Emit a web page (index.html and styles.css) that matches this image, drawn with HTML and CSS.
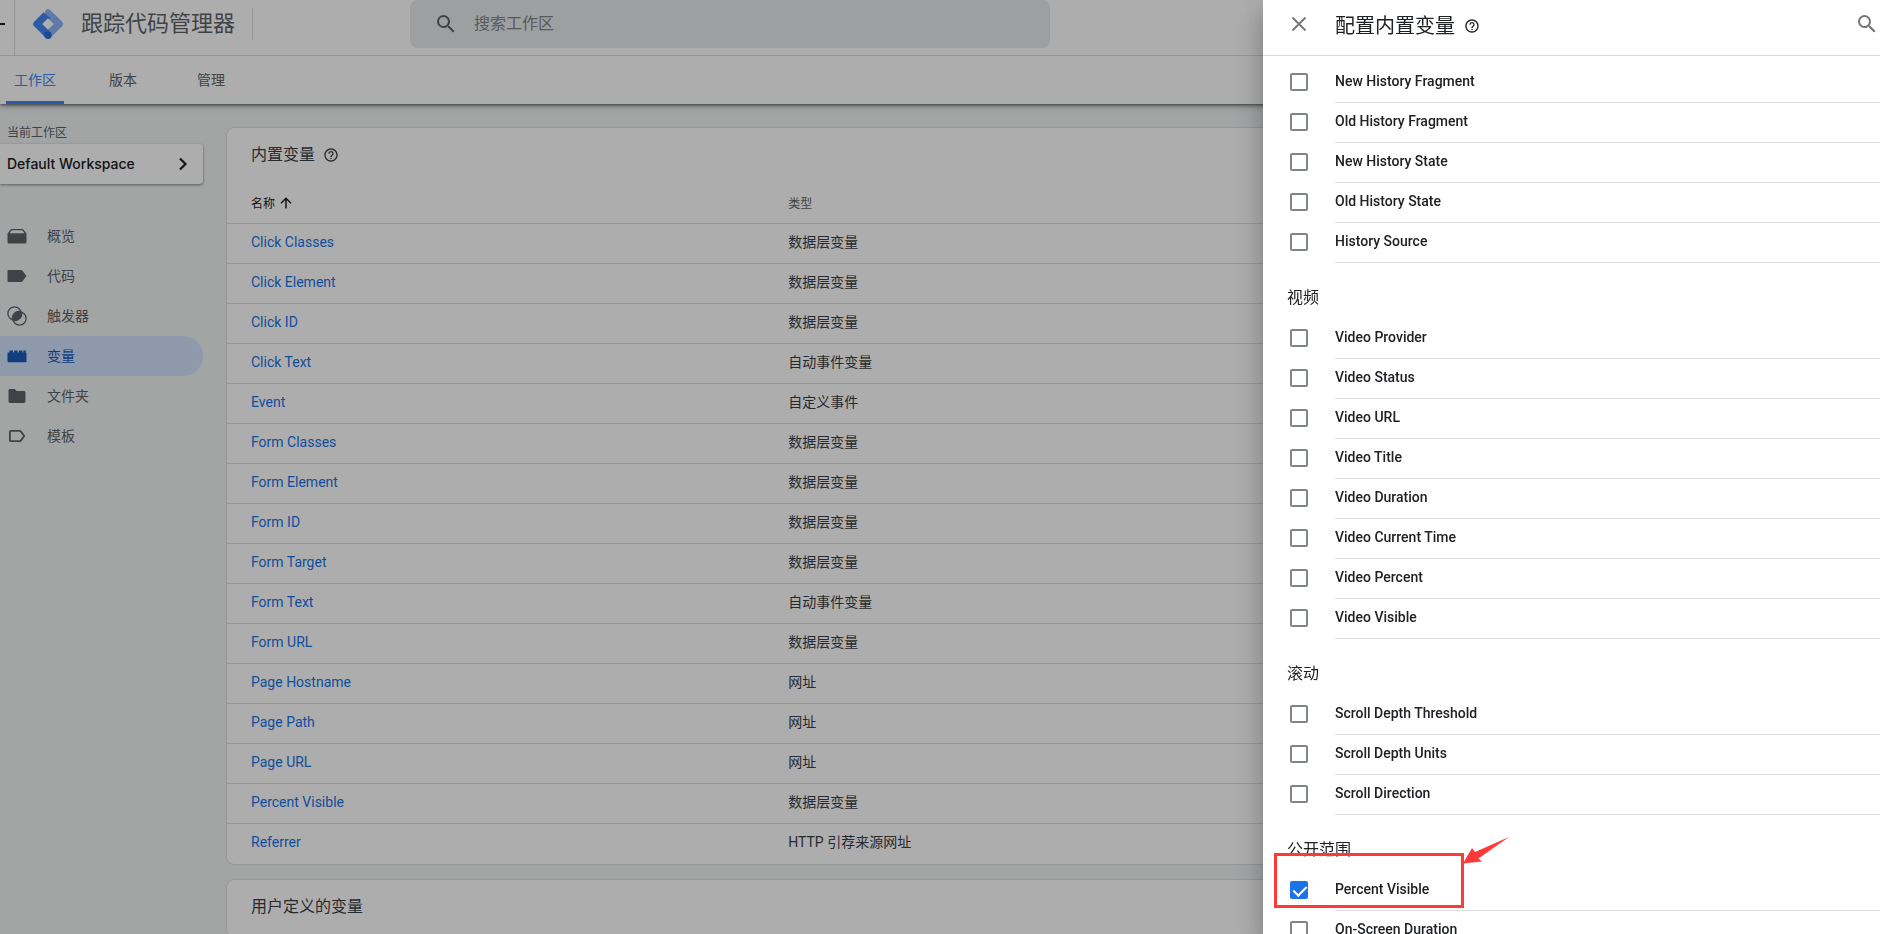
FILE: index.html
```html
<!DOCTYPE html>
<html lang="zh-CN">
<head>
<meta charset="utf-8">
<title>跟踪代码管理器</title>
<link rel="stylesheet" href="styles.css">
</head>
<body>
<svg class="sprite" aria-hidden="true">
  <symbol id="i-search" viewBox="0 0 24 24"><path d="M15.5 14h-.79l-.28-.27A6.471 6.471 0 0 0 16 9.5 6.5 6.5 0 1 0 9.5 16c1.61 0 3.09-.59 4.23-1.57l.27.28v.79l5 4.99L20.49 19l-4.99-5zm-6 0C7.01 14 5 11.99 5 9.5S7.01 5 9.5 5 14 7.01 14 9.5 11.99 14 9.5 14z"/></symbol>
  <symbol id="i-help" viewBox="0 0 24 24"><path d="M11 18h2v-2h-2v2zm1-16C6.48 2 2 6.48 2 12s4.48 10 10 10 10-4.48 10-10S17.52 2 12 2zm0 18c-4.41 0-8-3.59-8-8s3.59-8 8-8 8 3.59 8 8-3.59 8-8 8zm0-14c-2.21 0-4 1.79-4 4h2c0-1.1.9-2 2-2s2 .9 2 2c0 2-3 1.750-3 5h2c0-2.250 3-2.500 3-5 0-2.210-1.790-4-4-4z"/></symbol>
</svg>

<div class="app">
  <header class="topbar">
    <button class="back" type="button" aria-label="返回"><svg viewBox="0 0 14 24"><path d="M0 11h5v2H0z"/></svg></button>
    <div class="brand">
      <svg class="logo" viewBox="0 0 30 30">
        <path fill="#8ab4f8" d="M12.700 1.200a3.200 3.200 0 0 1 4.600 0L28.800 12.700a3.200 3.200 0 0 1 0 4.600L17.500 28.600 9 15z"/>
        <path fill="#4285f4" d="M10.600 3.300 1.200 12.700a3.200 3.200 0 0 0 0 4.600L12.500 28.600l7.800-8.200-5.300-.9L10.500 15l4.500-4.500 3-1z"/>
        <path fill="#8ab4f8" d="M28.800 12.700 21 4.900l-3.500 5.200L20 15l-5 5.300 5.200 5.400 8.600-8.400a3.200 3.200 0 0 0 0-4.600z"/>
        <circle cx="15" cy="26.300" r="3.700" fill="#246fdb"/>
        <path fill="#fff" d="M15 9.200 20.800 15 15 20.800 9.200 15z"/>
      </svg>
      <span class="brand-name">跟踪代码管理器</span>
    </div>
    <label class="search">
      <svg class="i24"><use href="#i-search"/></svg>
      <input type="text" placeholder="搜索工作区" aria-label="搜索工作区">
    </label>
  </header>

  <nav class="tabs">
    <button type="button" class="tab tab-on">工作区</button>
    <button type="button" class="tab">版本</button>
    <button type="button" class="tab">管理</button>
  </nav>

  <div class="body">
    <aside class="side">
      <div class="side-label">当前工作区</div>
      <button type="button" class="workspace">Default Workspace
        <svg viewBox="0 0 10 14"><path d="m2 1.500 5.500 5.500L2 12.500" fill="none" stroke="#202124" stroke-width="2.200"/></svg>
      </button>
      <nav class="menu">
        <a href="#"><svg viewBox="0 0 20 20"><path d="M4 3h12l3.500 4.500V16a1.500 1.500 0 0 1-1.500 1.500H2A1.500 1.500 0 0 1 .5 16V7.500zm.7 1.300L2.600 7.300h14.800l-2.100-3z"/></svg>概览</a>
        <a href="#"><svg viewBox="0 0 20 20"><path d="M1.500 4H14c.6 0 1 .2 1.300.6L19.500 10l-4.200 5.400c-.3.400-.7.600-1.300.6H1.500a1 1 0 0 1-1-1V5a1 1 0 0 1 1-1z"/></svg>代码</a>
        <a href="#"><svg viewBox="0 0 20 20"><circle cx="7.500" cy="7.500" r="6.600" fill="none" stroke="#5f6368" stroke-width="1.300"/><circle cx="12.500" cy="12.500" r="6.600" fill="none" stroke="#5f6368" stroke-width="1.300"/><path d="M14.600 5.400a7 7 0 0 1-9.200 9.200 7 7 0 0 1 9.200-9.200z"/></svg>触发器</a>
        <a href="#" class="on"><svg viewBox="0 0 20 20"><path d="M.5 6.500h2V4.600h3.400v1.900h1.300V4.600h3.400v1.900h1.300V4.600h3.400v1.900h1V4.600h2.500v1.900l.7.500v8.500a.8.800 0 0 1-.8.800H1.300a.8.800 0 0 1-.8-.8z"/></svg>变量</a>
        <a href="#"><svg viewBox="0 0 20 20"><path d="M3 3h4.700l2 2h7.100c.9 0 1.700.7 1.700 1.700v8.600c0 .9-.8 1.700-1.700 1.700H3c-.9 0-1.500-.8-1.500-1.700V4.700C1.500 3.800 2.100 3 3 3z"/></svg>文件夹</a>
        <a href="#"><svg viewBox="0 0 20 20"><path d="M3.800 4.800h8.800c.5 0 .9.200 1.200.6L17.200 10l-3.400 4.600c-.3.400-.7.600-1.200.6H3.800a.9.900 0 0 1-.9-.9V5.700c0-.5.400-.9.900-.9z" fill="none" stroke="#5f6368" stroke-width="1.800"/></svg>模板</a>
      </nav>
    </aside>

    <main class="main">
      <section class="card">
        <h2>内置变量 <svg class="i16"><use href="#i-help"/></svg></h2>
        <table>
          <thead><tr><th class="sorted">名称 <svg viewBox="0 0 12 12"><path d="M6 11.500V1.500M1 6.300 6 1.300l5 5" fill="none" stroke="currentColor" stroke-width="1.500"/></svg></th><th>类型</th></tr></thead>
          <tbody>
            <tr><td><a href="#">Click Classes</a></td><td>数据层变量</td></tr>
            <tr><td><a href="#">Click Element</a></td><td>数据层变量</td></tr>
            <tr><td><a href="#">Click ID</a></td><td>数据层变量</td></tr>
            <tr><td><a href="#">Click Text</a></td><td>自动事件变量</td></tr>
            <tr><td><a href="#">Event</a></td><td>自定义事件</td></tr>
            <tr><td><a href="#">Form Classes</a></td><td>数据层变量</td></tr>
            <tr><td><a href="#">Form Element</a></td><td>数据层变量</td></tr>
            <tr><td><a href="#">Form ID</a></td><td>数据层变量</td></tr>
            <tr><td><a href="#">Form Target</a></td><td>数据层变量</td></tr>
            <tr><td><a href="#">Form Text</a></td><td>自动事件变量</td></tr>
            <tr><td><a href="#">Form URL</a></td><td>数据层变量</td></tr>
            <tr><td><a href="#">Page Hostname</a></td><td>网址</td></tr>
            <tr><td><a href="#">Page Path</a></td><td>网址</td></tr>
            <tr><td><a href="#">Page URL</a></td><td>网址</td></tr>
            <tr><td><a href="#">Percent Visible</a></td><td>数据层变量</td></tr>
            <tr><td><a href="#">Referrer</a></td><td>HTTP 引荐来源网址</td></tr>
          </tbody>
        </table>
      </section>
      <section class="card">
        <h2>用户定义的变量</h2>
      </section>
    </main>
  </div>
</div>

<div class="scrim"></div>

<section class="drawer" aria-label="配置内置变量">
  <header class="drawer-head">
    <button type="button" class="icon-btn" aria-label="关闭"><svg viewBox="0 0 24 24" class="i24"><path d="m5.500 5.500 13 13m0-13-13 13" fill="none" stroke="#757575" stroke-width="1.800"/></svg></button>
    <h1>配置内置变量 <svg class="i16"><use href="#i-help"/></svg></h1>
    <button type="button" class="icon-btn find" aria-label="搜索"><svg class="i24"><use href="#i-search"/></svg></button>
  </header>
  <div class="drawer-body">
    <label class="opt"><input type="checkbox"><span>New History Fragment</span></label>
    <label class="opt"><input type="checkbox"><span>Old History Fragment</span></label>
    <label class="opt"><input type="checkbox"><span>New History State</span></label>
    <label class="opt"><input type="checkbox"><span>Old History State</span></label>
    <label class="opt"><input type="checkbox"><span>History Source</span></label>
    <h3>视频</h3>
    <label class="opt"><input type="checkbox"><span>Video Provider</span></label>
    <label class="opt"><input type="checkbox"><span>Video Status</span></label>
    <label class="opt"><input type="checkbox"><span>Video URL</span></label>
    <label class="opt"><input type="checkbox"><span>Video Title</span></label>
    <label class="opt"><input type="checkbox"><span>Video Duration</span></label>
    <label class="opt"><input type="checkbox"><span>Video Current Time</span></label>
    <label class="opt"><input type="checkbox"><span>Video Percent</span></label>
    <label class="opt"><input type="checkbox"><span>Video Visible</span></label>
    <h3>滚动</h3>
    <label class="opt"><input type="checkbox"><span>Scroll Depth Threshold</span></label>
    <label class="opt"><input type="checkbox"><span>Scroll Depth Units</span></label>
    <label class="opt"><input type="checkbox"><span>Scroll Direction</span></label>
    <h3>公开范围</h3>
    <div class="marked">
      <label class="opt"><input type="checkbox" checked><span>Percent Visible</span></label>
      <div class="mark"></div>
      <svg class="arrow" viewBox="0 0 46 27"><path fill="#fd3a38" d="M0 26.500 9 11l3 4L46 0 15.500 21.500l3.500 3z"/></svg>
    </div>
    <label class="opt"><input type="checkbox"><span>On-Screen Duration</span></label>
  </div>
</section>
</body>
</html>
```

FILE: styles.css
```css
* { box-sizing: border-box; }

body {
  margin: 0;
  height: 100vh;
  overflow: hidden;
  background: #f1f3f4;
  color: #3c4043;
  font: 14px/20px Roboto, "Noto Sans CJK SC", sans-serif;
}

button, input { font: inherit; color: inherit; }
button { border: 0; padding: 0; background: none; cursor: pointer; }
a { color: #1a73e8; text-decoration: none; }
h1, h2, h3 { margin: 0; font-weight: 400; }
svg { flex: none; fill: currentColor; }

.sprite { display: none; }
.i24 { width: 24px; height: 24px; }
.i16 { width: 16px; height: 16px; }

.app { height: 100%; display: flex; flex-direction: column; }

/* Top bar */
.topbar {
  position: relative;
  z-index: 1;
  display: flex;
  align-items: flex-start;
  height: 56px;
  flex: none;
  background: #fff;
  border-bottom: 1px solid #dadce0;
}
.back { width: 15px; height: 55px; border-right: 1px solid #dadce0; color: #202124; }
.back svg { display: block; width: 14px; height: 24px; margin-bottom: 7px; }
.brand {
  display: flex;
  align-items: center;
  gap: 18px;
  width: 238px;
  height: 32px;
  margin: 8px 157px 0 0;
  padding-left: 18px;
  border-right: 1px solid #dadce0;
}
.logo { width: 30px; height: 30px; }
.brand-name { font-size: 22px; line-height: 32px; color: #5f6368; }
.search {
  display: flex;
  align-items: center;
  gap: 16px;
  flex: 0 1 640px;
  height: 48px;
  padding-left: 24px;
  border-radius: 8px;
  background: #e8eaed;
  color: #5f6368;
}
.search input {
  flex: 1;
  border: 0;
  padding: 0;
  background: none;
  outline: 0;
  font-size: 16px;
  line-height: 24px;
}
.search input::placeholder { color: #80868b; }

/* Tabs */
.tabs {
  display: flex;
  gap: 30px;
  flex: none;
  height: 48px;
  padding-left: 6px;
  background: #fff;
  box-shadow: 0 1px 8px rgba(0, 0, 0, .35), 0 1px 3px rgba(0, 0, 0, .5);
  position: relative;
}
.tab { width: 58px; padding-top: 3px; border-bottom: 3px solid transparent; border-radius: 2px 2px 0 0; color: #5f6368; }
.tab-on { color: #4285f4; border-bottom-color: #4285f4; }

.body { display: flex; flex: 1; min-height: 0; }

/* Left navigation */
.side { width: 203px; flex: none; padding-top: 19px; }
.side-label { padding-left: 7px; font-size: 12px; line-height: 20px; color: #5f6368; }
.workspace {
  display: flex;
  align-items: center;
  justify-content: space-between;
  width: 100%;
  height: 40px;
  margin: 1px 0 32px;
  padding: 0 15px 0 7px;
  border-radius: 0 4px 4px 0;
  background: #fff;
  box-shadow: 0 1px 3px rgba(60, 64, 67, .6);
  color: #202124;
  font-family: Inter, sans-serif;
  font-weight: 500;
}
.workspace svg { width: 10px; height: 14px; }
.menu a {
  display: flex;
  align-items: center;
  gap: 20px;
  height: 40px;
  padding-left: 7px;
  border-radius: 0 20px 20px 0;
  color: #5f6368;
}
.menu svg { width: 20px; height: 20px; }
.menu .on { background: #d2e3fc; color: #185abc; }

/* Variable tables */
.main { flex: 1; min-width: 0; padding: 23px 24px 0 23px; display: flex; flex-direction: column; gap: 14px; }
.card { flex: none; background: #fff; border: 1px solid #dadce0; border-radius: 8px; padding-bottom: 1px; }
.card h2 {
  display: flex;
  align-items: center;
  gap: 8px;
  height: 55px;
  padding: 0 24px 2px;
  font-size: 16px;
  line-height: 24px;
}
table { width: 100%; border-collapse: collapse; table-layout: fixed; }
th, td { height: 40px; padding: 0 24px 2px; border-top: 1px solid #dadce0; text-align: left; }
th:first-child { width: 33%; }
th { padding: 2px 24px 0; border-top: 0; font-size: 12px; font-weight: 400; color: #5f6368; }
.sorted { color: #202124; }
th svg { width: 12px; height: 12px; margin-left: 2px; vertical-align: -1px; }

.scrim { position: fixed; inset: 0; z-index: 1; background: rgba(0, 0, 0, .32); }

/* Drawer */
.drawer {
  position: fixed;
  inset: 0 0 0 auto;
  z-index: 2;
  width: 617px;
  max-width: 100%;
  display: flex;
  flex-direction: column;
  background: #fff;
  color: #202124;
  box-shadow: 0 16px 24px 2px rgba(0, 0, 0, .14), 0 6px 30px 5px rgba(0, 0, 0, .12), 0 8px 10px -5px rgba(0, 0, 0, .2);
}
.drawer-head {
  display: flex;
  align-items: center;
  gap: 24px;
  flex: none;
  height: 56px;
  padding: 0 1px 7px 24px;
  border-bottom: 1px solid #dadce0;
}
.drawer-head h1 { display: flex; align-items: center; gap: 9px; padding-top: 3px; font-size: 20px; line-height: 24px; }
.icon-btn { width: 24px; height: 24px; color: #757575; }
.find { margin-left: auto; }
.drawer-body { flex: 1; min-height: 0; overflow: hidden; padding: 7px 0 0 24px; }
.drawer-body h3 { height: 56px; padding-top: 23px; font-size: 16px; line-height: 24px; }
.opt { display: flex; align-items: flex-start; gap: 27px; height: 40px; padding-left: 3px; font-weight: 500; }
.opt span { flex: 1; height: 40px; line-height: 37px; border-bottom: 1px solid #dadce0; }
.opt input {
  appearance: none;
  width: 18px;
  height: 18px;
  margin: 10px 0 0;
  border: 2px solid #80868b;
  border-radius: 2px;
}
.opt input:checked { border-color: #1a73e8; background: #1a73e8; position: relative; }
.opt input:checked::after {
  content: "";
  position: absolute;
  left: 4px;
  top: 0;
  width: 6px;
  height: 11px;
  border: solid #fff;
  border-width: 0 2px 2px 0;
  transform: rotate(45deg);
}

/* Callout around the selected variable */
.marked { position: relative; }
.mark { position: absolute; left: -13px; top: -18px; width: 190px; height: 55px; border: 3px solid #fd3a38; }
.arrow { position: absolute; left: 176px; top: -34px; width: 46px; height: 27px; }
```
